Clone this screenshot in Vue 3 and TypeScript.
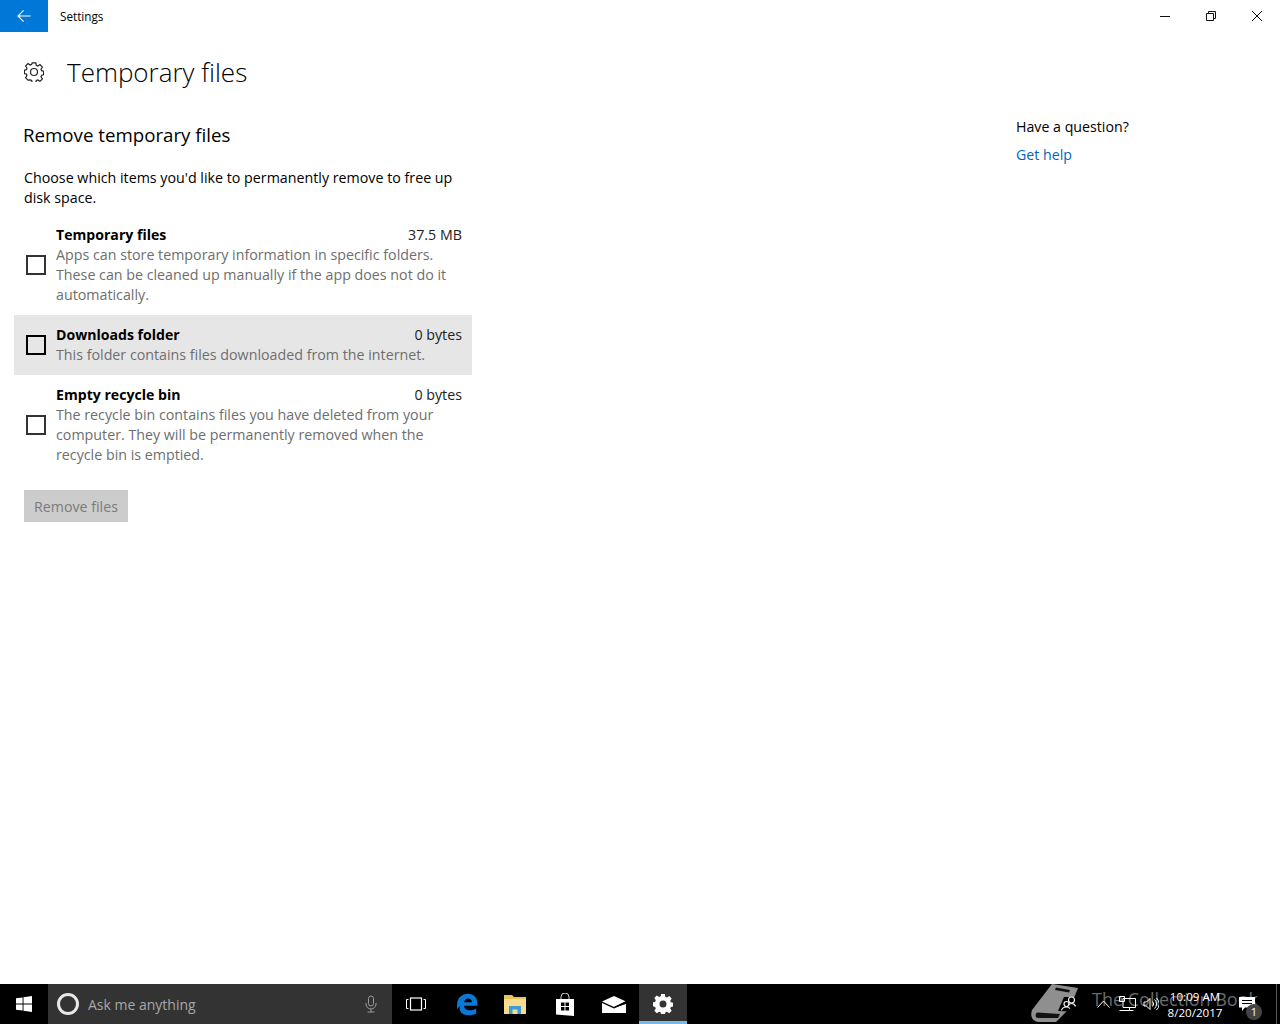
<script setup lang="ts">
interface Item { title: string; size: string; desc: string[]; hover?: boolean }
const items: Item[] = [
  { title: 'Temporary files', size: '37.5 MB', desc: ['Apps can store temporary information in specific folders.', 'These can be cleaned up manually if the app does not do it', 'automatically.'] },
  { title: 'Downloads folder', size: '0 bytes', desc: ['This folder contains files downloaded from the internet.'], hover: true },
  { title: 'Empty recycle bin', size: '0 bytes', desc: ['The recycle bin contains files you have deleted from your', 'computer. They will be permanently removed when the', 'recycle bin is emptied.'] },
]
</script>

<template>
  <div class="screen">
    <header class="titlebar">
      <button class="back" aria-label="Back">
        <svg width="14" height="14" viewBox="0 0 14 14" fill="none" stroke="#fff" stroke-width="1.1"><path d="M1 7h12.5M6.6 1.4 1 7l5.6 5.6" /></svg>
      </button>
      <span class="app-name">Settings</span>
      <div class="win-ctrls">
        <span class="ctrl"><svg width="12" height="12" viewBox="0 0 12 12" stroke="#111" fill="none"><path d="M1 6.500h10" /></svg></span>
        <span class="ctrl"><svg width="12" height="12" viewBox="0 0 12 12" stroke="#111" fill="none"><path d="M1.500 3.500h7v7h-7zM3.500 3.500v-2h7v7h-2" /></svg></span>
        <span class="ctrl"><svg width="12" height="12" viewBox="0 0 12 12" stroke="#111" fill="none"><path d="M1 1l10 10M11 1 1 11" /></svg></span>
      </div>
    </header>

    <main class="body">
      <section class="content">
        <div class="page-head">
          <svg class="gear" width="20" height="20" viewBox="0 0 20 20" fill="none" stroke="#222" stroke-width="1.200">
            <path d="M8.200.8h3.600l.5 2.500 1.500.7 2.200-1.400 2.400 2.400-1.400 2.200.6 1.500 2 .5v3.600l-2 .4-.6 1.500 1.400 2.200-2.400 2.400-2.200-1.400-1.500.6-.5 2.200H8.200l-.5-2.200-1.500-.6L4 18.100l-2.400-2.400L3 13.500l-.6-1.500-2-.4V8.200l2-.5.6-1.500L1.600 4 4 1.600l2.200 1.400 1.500-.7z" />
            <circle cx="10" cy="10" r="3.500" />
          </svg>
          <h1>Temporary files</h1>
        </div>
        <h2>Remove temporary files</h2>
        <p class="intro">Choose which items you'd like to permanently remove to free up<br />disk space.</p>
        <div class="list">
          <label v-for="it in items" :key="it.title" class="row" :class="{ hover: it.hover }">
            <span class="box"></span>
            <span class="texts">
              <span class="line-top"><b>{{ it.title }}</b><span class="size">{{ it.size }}</span></span>
              <span v-for="d in it.desc" :key="d" class="desc">{{ d }}</span>
            </span>
          </label>
        </div>
        <button class="remove" disabled>Remove files</button>
      </section>
      <aside class="help">
        <div>Have a question?</div>
        <a href="#">Get help</a>
      </aside>
    </main>

    <footer class="taskbar">
      <span class="start">
        <svg width="16" height="16" viewBox="0 0 16 16" fill="#fff"><path d="M0 2.300 6.600 1.400v6.200H0zM7.500 1.300 16 0v7.600H7.500zM0 8.500h6.600v6.100L0 13.700zM7.500 8.500H16V16l-8.500-1.300z" /></svg>
      </span>
      <div class="search">
        <span class="cortana"></span>
        <span class="ask">Ask me anything</span>
        <svg class="mic" width="14" height="18" viewBox="0 0 14 18" fill="none" stroke="#9a9a9a"><rect x="4.500" y="1" width="5" height="10" rx="2.500" /><path d="M2 8v1a5 5 0 0 0 10 0V8M7 14v3M3.500 17h7" /></svg>
      </div>
      <span class="tb tb-first">
        <svg width="20" height="14" viewBox="0 0 20 14" fill="none" stroke="#fff"><rect x="4.500" y="1" width="11" height="12" stroke-width="1.200" /><path d="M2.500 2.500H.5v9h2M17.500 2.500h2v9h-2" /></svg>
      </span>
      <span class="tb edge-ic">
        <svg width="22" height="23" viewBox="0 0 22 23"><path d="M1 12C1 5 6 .8 12 .8c5.800 0 9.500 3.800 9.500 10v2H8c.3 3 2.600 4.500 5.600 4.500 2.400 0 4.600-.7 6.600-1.900v5c-2 1.200-4.700 1.800-7.500 1.800C5.500 22.200 2.500 18 4 13c-1 .7-2 1.600-3 3.500zM8 9.300h8c-.2-2.500-1.600-3.900-3.900-3.900-2.200 0-3.700 1.500-4.100 3.900z" fill="#0a78d4" /></svg>
      </span>
      <span class="tb">
        <svg width="22" height="19" viewBox="0 0 22 19"><path d="M0 0h8l2 2h12v17H0z" fill="#e8c25f" /><path d="M0 4h22v15H0z" fill="#f7dc8e" /><path d="M5 19v-8h12v8h-3.500v-4.500h-5V19z" fill="#3e9bd8" /></svg>
      </span>
      <span class="tb">
        <svg width="20" height="23" viewBox="0 0 20 23"><path d="M6 6V4a4 4 0 0 1 8 0v2" fill="none" stroke="#ccc" /><path d="M1 6h18v17L1 21.500z" fill="#fff" /><path d="M6 9.500h3.500V13H6zM10.500 9.500H14V13h-3.500zM6 14h3.500v3.500H6zM10.500 14H14v3.500h-3.500z" fill="#000" /></svg>
      </span>
      <span class="tb">
        <svg width="24" height="17" viewBox="0 0 24 17"><path d="M0 5.500 12 0l12 5.500L12 11z" fill="#fff" /><path d="M0 7 12 12.500 24 7v10H0z" fill="#fff" /><path d="M11 11.500 24 5v3l-8 2.500z" fill="#000" /></svg>
      </span>
      <span class="active">
        <svg width="20" height="20" viewBox="0 0 20 20" fill="#fff"><path fill-rule="evenodd" d="M8.200 0h3.600l.5 2.700 1.600.7 2.300-1.500 2.500 2.500-1.500 2.300.7 1.600 2.700.5v3.600l-2.700.5-.7 1.600 1.500 2.300-2.500 2.500-2.300-1.500-1.600.7-.5 2.700H8.200l-.5-2.700-1.600-.7-2.300 1.500-2.500-2.500 1.500-2.300-.7-1.600L-.6 12V8.400l2.700-.5.7-1.600-1.500-2.300 2.500-2.500 2.300 1.500 1.600-.7zM10 6.500a3.500 3.500 0 1 0 0 7 3.500 3.500 0 0 0 0-7z" /></svg>
      </span>
      <div class="watermark">
        <svg width="50" height="40" viewBox="0 0 50 40">
          <path d="M22 0 48 4 40 24 26 38 8 38C2 37 0 32 2 26z" fill="#8f8f8f" />
          <path d="M26 3.500 40 6l-1 2.500L25 6z" fill="#111" />
          <path d="M7 28.500 30 30l-2 4H8c-3 0-3-4-1-5.500z" fill="#111" />
          <path d="M28 27 34 13 50 13 50 28z" fill="#000" />
          <g fill="none" stroke="#eee" stroke-width="1.200"><circle cx="41.500" cy="16" r="3" /><circle cx="36.500" cy="20" r="2.500" /><path d="M31.500 26.500c.5-2.500 2.500-3.500 5-3.500 1.500 0 2.500.5 3.500 1.500M38 21.500c1-1.500 2-2 3.500-2 2 0 3.500 1 4 3" /></g>
        </svg>
        <span>The Collection Book</span>
      </div>
      <div class="tray">
        <span class="slot"><svg width="13" height="8" viewBox="0 0 13 8" fill="none" stroke="#fff"><path d="M.5 7.500 6.500 1l6 6.500" /></svg></span>
        <span class="slot"><svg width="17" height="16" viewBox="0 0 17 16" fill="none" stroke="#fff"><path d="M4 2.500h12.500v9H4zM10.500 11.500v3M.5 14.500h14M.5.5h5v5h-5z" /></svg></span>
        <span class="slot"><svg width="16" height="14" viewBox="0 0 16 14" fill="none" stroke="#fff"><path d="M1 5h2.500L7 1.500v11L3.500 9H1zM9.500 4.500a3.500 3.500 0 0 1 0 5M11.500 2.500a6 6 0 0 1 0 9M13.500 1a8 8 0 0 1 0 12" /></svg></span>
        <div class="clock"><span>10:09 AM</span><span>8/20/2017</span></div>
        <span class="notif">
          <svg width="16" height="14" viewBox="0 0 16 14" fill="#fff"><path d="M0 0h16v10.500H6L3 14v-3.500H0z" /><path d="M3 3.500h10M3 6.500h10" stroke="#000" /></svg>
          <i>1</i>
        </span>
      </div>
      <span class="edge"></span>
    </footer>
  </div>
</template>

<style>
html, body { margin: 0; background: #fff; }
</style>

<style scoped>
.screen { width: 1280px; height: 1024px; display: flex; flex-direction: column; overflow: hidden; font-family: "Open Sans", "Noto Sans", sans-serif; color: #000; background: #fff; }
.titlebar { height: 32px; flex: none; display: flex; align-items: center; }
.back { width: 48px; height: 32px; background: #0078d7; border: 0; padding: 0; display: flex; align-items: center; justify-content: center; }
.app-name { margin-left: 12px; font-size: 11.700px; margin-top: -1px; }
.win-ctrls { margin-left: auto; display: flex; }
.ctrl { width: 46px; height: 32px; display: flex; align-items: center; justify-content: center; }
.body { flex: 1; display: flex; justify-content: space-between; min-height: 0; }
.content { width: 472px; padding-left: 14px; }
.page-head { display: flex; align-items: center; height: 40px; margin: 20px 0 0 10px; }
.gear { flex: none; }
h1 { font-size: 26px; font-weight: 300; margin: 0 0 0 23px; line-height: 40px; }
h2 { font-size: 18.700px; font-weight: 400; margin: 30px 0 0 9px; line-height: 26px; }
.intro { font-size: 14.250px; line-height: 20px; margin: 20px 0 7px 10px; }
.list { display: flex; flex-direction: column; width: 458px; }
.row { display: flex; align-items: center; padding: 10px 10px 10px 12px; }
.row.hover { background: #e6e6e6; }
.box { width: 16px; height: 16px; border: 2px solid #333; flex: none; margin-right: 10px; }
.row.hover .box { border-color: #000; }
.texts { flex: 1; display: flex; flex-direction: column; font-size: 14.250px; line-height: 20px; }
.line-top { display: flex; justify-content: space-between; }
.line-top b { font-weight: 700; font-size: 14.100px; }
.size { color: #222; }
.desc { color: #6e6e6e; white-space: nowrap; }
.remove { display: block; width: 104px; height: 32px; margin: 15px 0 0 10px; background: #ccc; border: 0; color: #7a7a7a; font: inherit; font-size: 14.200px; padding: 0; }
.help { width: 264px; margin-top: 85px; font-size: 14.200px; line-height: 20px; display: flex; flex-direction: column; gap: 8px; }
.help a { color: #0067b8; text-decoration: none; }
.taskbar { position: relative; height: 40px; flex: none; background: #000; display: flex; align-items: center; overflow: hidden; }
.start { width: 48px; height: 40px; flex: none; display: flex; align-items: center; justify-content: center; }
.tb { width: 49.400px; height: 40px; flex: none; display: flex; align-items: center; justify-content: center; }
.tb-first svg { margin-right: 2px; }
.edge-ic svg { margin-left: 1px; }
.search { width: 344px; height: 40px; flex: none; background: #333; display: flex; align-items: center; box-sizing: border-box; padding: 0 14px 0 9px; }
.cortana { width: 16px; height: 16px; border: 3px solid #e8e8e8; border-radius: 50%; flex: none; }
.ask { margin-left: 9px; color: #a8a8a8; font-size: 14px; }
.mic { margin-left: auto; }
.active { width: 48px; height: 40px; flex: none; display: flex; align-items: center; justify-content: center; box-sizing: border-box; background: #333; border-bottom: 3px solid #76b9ed; padding-top: 3px; }
.watermark { position: absolute; left: 1030px; top: 0; display: flex; align-items: flex-start; color: #6a6a6a; font-size: 18px; line-height: 30px; pointer-events: none; }
.watermark span { margin-left: 12px; white-space: nowrap; }
.tray { position: absolute; left: 1091px; top: 0; height: 40px; display: flex; align-items: center; color: #fff; }
.slot { width: 24px; display: flex; justify-content: center; }
.clock { width: 64px; display: flex; flex-direction: column; align-items: center; font-size: 11.600px; line-height: 16px; padding-top: 1px; }
.notif { position: relative; display: flex; margin-left: 12px; }
.notif i { position: absolute; left: 7px; top: 7px; width: 16px; height: 16px; border-radius: 50%; background: #444; color: #fff; font-style: normal; font-size: 11px; line-height: 16px; text-align: center; }
.edge { position: absolute; right: 3px; top: 0; width: 1px; height: 40px; background: #555; }
</style>
